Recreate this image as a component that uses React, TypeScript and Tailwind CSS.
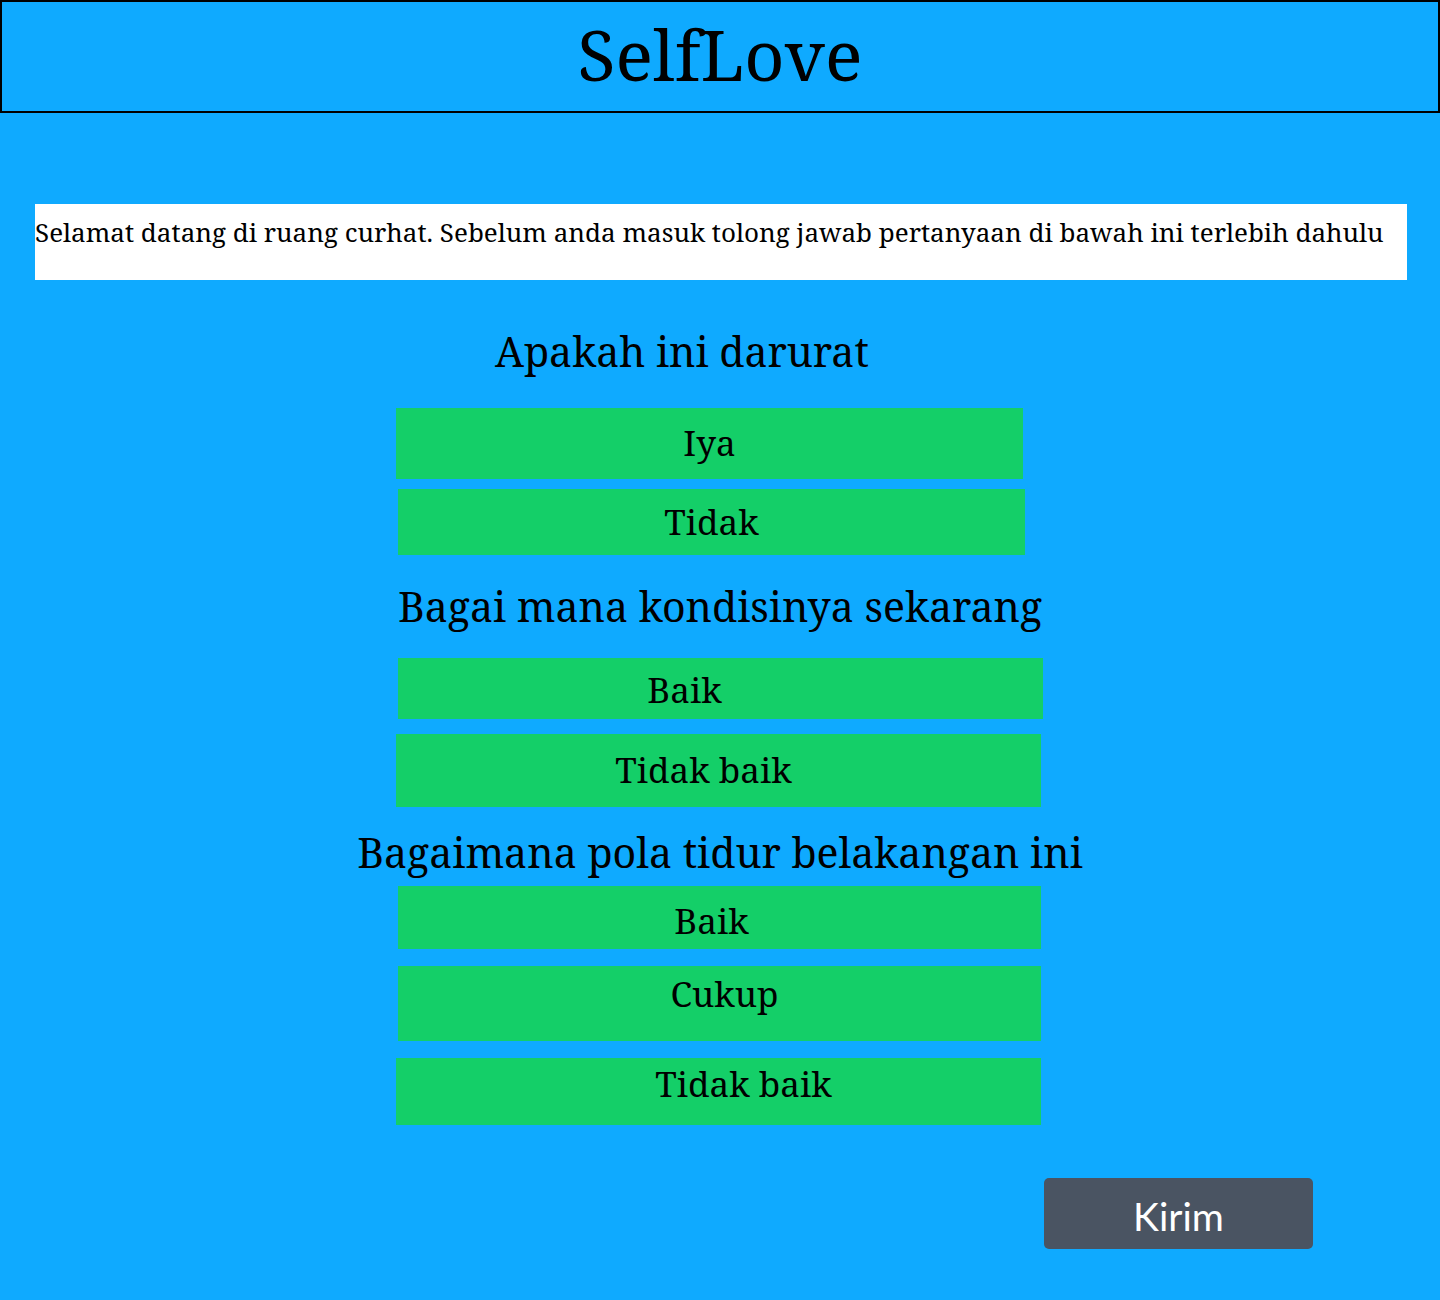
export default function App() {
  const serif = { fontFamily: '"Noto Serif", "DejaVu Serif", serif' };

  return (
    <div className="min-h-[1300px] bg-[#0faaff] text-black" style={serif}>
      <header className="h-[113px] border-2 border-black flex items-center justify-center pb-[6px]">
        <h1 className="text-[70px] leading-none">SelfLove</h1>
      </header>

      <div className="ml-[35px] mr-[33px] mt-[91px] h-[76px] bg-white pt-[13px]">
        <p className="text-[26px] leading-[30px]">
          Selamat datang di ruang curhat. Sebelum anda masuk tolong jawab pertanyaan di bawah ini terlebih dahulu
        </p>
      </div>

      <div className="w-[1440px] flex flex-col">
        <h2 className="mt-[44px] ml-[495px] text-[41px] leading-[54px]">Apakah ini darurat</h2>
        <button className="mt-[30px] ml-[396px] w-[627px] h-[71px] bg-[#14cf68] text-[35px]">Iya</button>
        <button className="mt-[10px] ml-[398px] w-[627px] h-[66px] bg-[#14cf68] text-[35px]">Tidak</button>

        <h2 className="mt-[24px] self-center text-[41px] leading-[54px]">Bagai mana kondisinya sekarang</h2>
        <button className="mt-[25px] ml-[398px] w-[645px] h-[61px] bg-[#14cf68] text-[35px] pr-[72px] pt-[3px]">Baik</button>
        <button className="mt-[15px] ml-[396px] w-[645px] h-[73px] bg-[#14cf68] text-[35px] pr-[30px]">Tidak baik</button>

        <h2 className="mt-[15px] self-center text-[41px] leading-[60px]">Bagaimana pola tidur belakangan ini</h2>
        <button className="mt-[4px] ml-[398px] w-[643px] h-[63px] bg-[#14cf68] text-[35px] pr-[16px] pt-[8px]">Baik</button>
        <button className="mt-[17px] ml-[398px] w-[643px] h-[75px] bg-[#14cf68] text-[35px] pl-[10px] pb-[18px]">Cukup</button>
        <button className="mt-[17px] ml-[396px] w-[645px] h-[67px] bg-[#14cf68] text-[35px] pl-[50px] pb-[18px]">Tidak baik</button>

        <button
          className="mt-[53px] ml-[1044px] w-[269px] h-[71px] rounded-[5px] bg-[#4a5462] text-white text-[39px] pt-[6px]"
          style={{ fontFamily: 'Lato, "Liberation Sans", sans-serif' }}
        >
          Kirim
        </button>
      </div>
    </div>
  );
}
